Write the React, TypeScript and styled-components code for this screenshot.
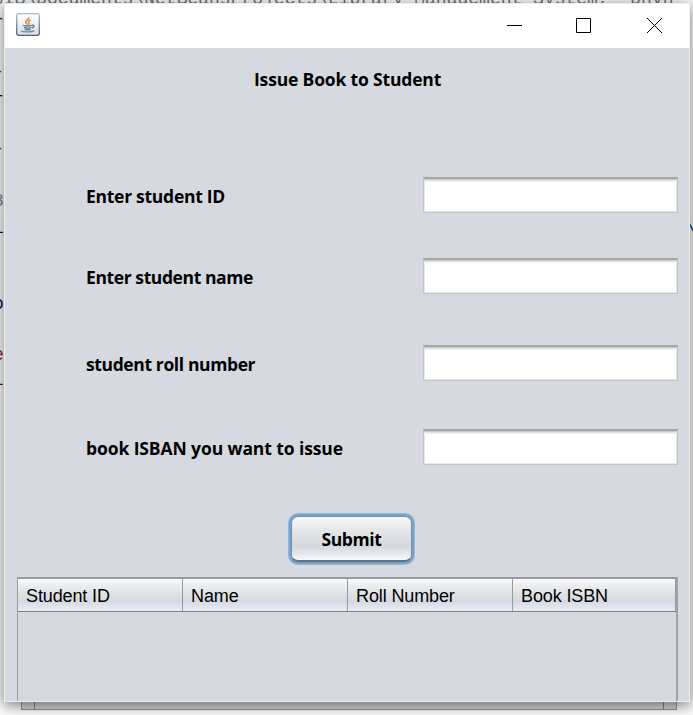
import React from "react";
import styled, { createGlobalStyle } from "styled-components";

const GlobalStyle = createGlobalStyle`
  *, *::before, *::after { box-sizing: border-box; }
  body { margin: 0; background: #fff; }
`;

const Desktop = styled.div`
  position: relative;
  width: 693px;
  height: 715px;
  overflow: hidden;
  background: #fff;
`;

const CodeLine = styled.div<{ $x: number; $y: number; $color?: string }>`
  position: absolute;
  left: ${(p) => p.$x}px;
  top: ${(p) => p.$y}px;
  font: 18px/20px "Liberation Mono", monospace;
  color: ${(p) => p.$color ?? "#111"};
  white-space: pre;
`;

const BackPanel = styled.div`
  position: absolute;
  left: 21px;
  top: 600px;
  width: 656px;
  height: 110px;
  padding: 0 12px;
  background: #d6d9df;
  border: 1px solid #92979d;
  border-top: 0;
`;

const BackPanelInner = styled.div`
  height: 100%;
  border: solid #7c838b;
  border-width: 0 1px;
`;

const Window = styled.main`
  position: relative;
  display: flex;
  flex-direction: column;
  width: 686px;
  height: 699px;
  margin: 3px 0 0 4px;
  border: 1px solid #efefef;
  background: #d6d9e0;
  box-shadow: 0 3px 14px 1px rgba(0, 0, 0, 0.5);
`;

const TitleBar = styled.header`
  display: flex;
  flex: none;
  justify-content: space-between;
  height: 44px;
  padding: 9px 27px 0 11px;
  background: #fff;
`;

const Controls = styled.div`
  display: grid;
  grid-template-columns: 69px 71px 15px;
  padding-top: 4px;
`;

const Title = styled.h1`
  flex: none;
  height: 24px;
  margin: 19px 0 86px 249px;
  font: 700 17.5px/24px "Open Sans", "Noto Sans", sans-serif;
  letter-spacing: -0.17px;
  color: #000;
  white-space: nowrap;
`;

const Form = styled.form`
  display: flex;
  flex: none;
  flex-direction: column;
  height: 400px;
`;

const FieldRow = styled.div<{ $after: number }>`
  display: flex;
  align-items: center;
  flex: none;
  height: 36px;
  margin: 0 0 ${(p) => p.$after}px 81px;
`;

const Label = styled.label<{ $spacing: number }>`
  width: 337px;
  padding-top: 2px;
  font: 700 17.5px/24px "Open Sans", "Noto Sans", sans-serif;
  letter-spacing: ${(p) => p.$spacing}px;
  color: #000;
  white-space: nowrap;
`;

const Input = styled.input`
  width: 255px;
  height: 36px;
  padding: 4px 8px;
  border: 1px solid #c3c4c6;
  border-top: 2px solid #a5a6a8;
  border-radius: 0;
  outline: 0;
  background: #fff;
  box-shadow: inset 0 1px #cacaca, inset 0 2px #e5e5e5, inset 0 3px #f2f2f2,
    inset 0 0 0 1px #e7e7e7;
`;

const SubmitButton = styled.button`
  flex: none;
  width: 121px;
  height: 46px;
  margin: 51px 0 0 286px;
  padding: 1px 0 0;
  border: 1px solid #858b92;
  border-bottom: 2px solid #686f78;
  border-radius: 7px;
  background: linear-gradient(#f7f8f9 0%, #e5e7e9 30%, #d5d8de 68%, #e2e6ee 84%, #f7faff 100%);
  box-shadow: 0 0 0 2px #73a4d1, 0 0 0 3px rgba(115, 164, 209, 0.65);
  font: 700 17.5px/24px "Open Sans", "Noto Sans", sans-serif;
  letter-spacing: -0.35px;
  color: #000;
`;

const Table = styled.section`
  flex: 1;
  margin: 0 11px 0 12px;
  border: 1px solid #969ca6;
  border-top-width: 2px;
  border-right: 2px solid #9ca3af;
  border-bottom: 0;
`;

const TableHead = styled.div`
  display: grid;
  grid-template-columns: 165px 165px 165px 1fr;
  height: 33px;
  border-bottom: 1px solid #7d838e;
`;

const HeadCell = styled.div`
  height: 32px;
  padding: 1px 0 0 8px;
  border-right: 1px solid #969ba3;
  background: linear-gradient(#fbfbfc 0%, #e9eaed 25%, #d7d9de 70%, #dce0e8 80%, #eaedf6 100%);
  font: 18px/33px "Liberation Sans", Arial, sans-serif;
  letter-spacing: -0.12px;
  color: #000;
`;

const fragments = [
  { text: "r", y: 13, color: "#134" },
  { text: "-", y: 62 },
  { text: "r", y: 90, color: "#111" },
  { text: "-", y: 139 },
  { text: "8", y: 191, color: "#778ca5" },
  { text: "i", y: 218 },
  { text: "o", y: 294, color: "#215" },
  { text: "e", y: 345, color: "#922" },
  { text: "l", y: 370, color: "#611" },
];

const fields = [
  { id: "sid", label: "Enter student ID", after: 45, spacing: -0.27 },
  { id: "name", label: "Enter student name", after: 51, spacing: -0.4 },
  { id: "roll", label: "student roll number", after: 48, spacing: -0.38 },
  { id: "isbn", label: "book ISBAN you want to issue", after: 0, spacing: -0.1 },
];

function JavaIcon() {
  return (
    <svg width="24" height="24" viewBox="0 0 24 24" fill="none" aria-label="Java">
      <defs>
        <linearGradient id="tile" x1="0" y1="0" x2="0" y2="1">
          <stop offset="0" stopColor="#fff" />
          <stop offset="1" stopColor="#dadcde" />
        </linearGradient>
        <linearGradient id="edge" x1="0" y1="0" x2="0" y2="1">
          <stop offset="0" stopColor="#a9bccb" />
          <stop offset="1" stopColor="#47627a" />
        </linearGradient>
      </defs>
      <rect x=".7" y=".7" width="22.6" height="21.6" rx="2" fill="url(#tile)" stroke="url(#edge)" strokeWidth="1.3" />
      <path d="M12.8 4c1 2.2-3.7 3.2-3.2 5.2.2 1 1.5 1.6 1.7 2.5M14.5 7c-2.3.8-2.8 2-1.8 3 .6.7.3 1.3-.3 1.8" stroke="#e88b3c" strokeWidth="1.5" />
      <path d="M7 12.3c1.5 1 7.8.8 9.3 0M8 14.4c1.8.7 5.4.7 7 0M8.7 16.3c1.5.6 4.1.6 5.8 0M16 12.4c2.8-.8 2.6 2.1-.4 2.8" stroke="#55758f" strokeWidth="1.3" />
      <path d="M5 18c2 1.2 11 1.2 13.5-.4" stroke="#6d8ba3" strokeWidth="1.4" />
    </svg>
  );
}

export default function App() {
  return (
    <>
      <GlobalStyle />
      <Desktop>
        <CodeLine $x={-7} $y={-11} $color="#777">
          {"UIB\\Documents\\NetBeansProjects\\Library Management System, -Dnvh"}
        </CodeLine>
        {fragments.map((f) => (
          <CodeLine key={f.y} $x={-7} $y={f.y} $color={f.color}>
            {f.text}
          </CodeLine>
        ))}
        <CodeLine $x={686} $y={219} $color="#146">{"\\"}</CodeLine>
        <BackPanel>
          <BackPanelInner />
        </BackPanel>
        <Window>
          <TitleBar>
            <JavaIcon />
            <Controls>
              <svg width="15" height="16" stroke="#000">
                <path d="M0 8.5h15" />
              </svg>
              <svg width="15" height="16" fill="none" stroke="#000">
                <path d="M.5 1.5h14v14H.5z" />
              </svg>
              <svg width="15" height="16" stroke="#000">
                <path d="M0 1l15 15M15 1L0 16" />
              </svg>
            </Controls>
          </TitleBar>
          <Title>Issue Book to Student</Title>
          <Form onSubmit={(e) => e.preventDefault()}>
            {fields.map((f) => (
              <FieldRow key={f.id} $after={f.after}>
                <Label htmlFor={f.id} $spacing={f.spacing}>{f.label}</Label>
                <Input id={f.id} />
              </FieldRow>
            ))}
            <SubmitButton type="submit">Submit</SubmitButton>
          </Form>
          <Table>
            <TableHead>
              {["Student ID", "Name", "Roll Number", "Book ISBN"].map((h) => (
                <HeadCell key={h}>{h}</HeadCell>
              ))}
            </TableHead>
          </Table>
        </Window>
      </Desktop>
    </>
  );
}
